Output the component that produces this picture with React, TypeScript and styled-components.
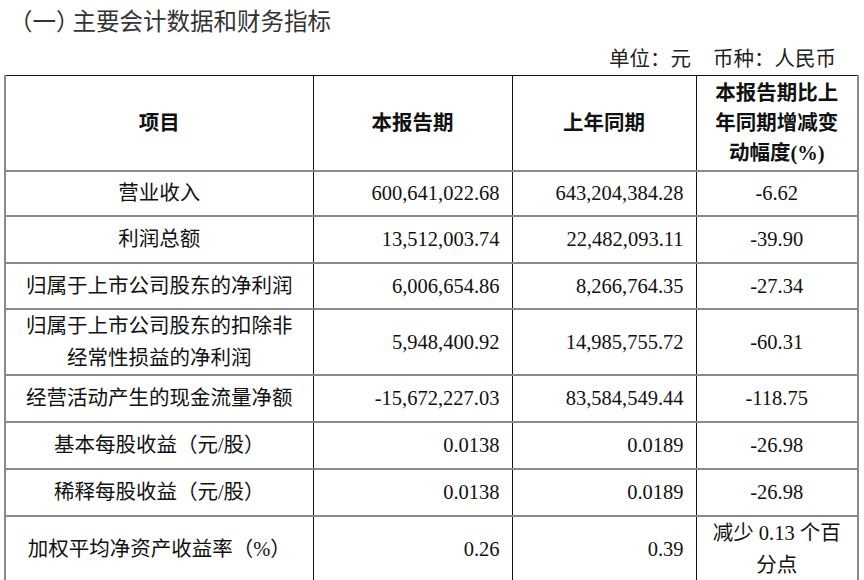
import React from 'react'
import styled, { createGlobalStyle } from 'styled-components'

const GlobalStyle = createGlobalStyle`
    html, body {
        margin: 0;
        padding: 0;
        background: #ffffff;
    }
    body {
        font-family: "Liberation Serif", "Noto Sans CJK SC", serif;
        color: #111;
    }
`;

const Page = styled.div`
    width: 864px;
    height: 580px;
    overflow: hidden;
    padding: 0 0 0 4px;
    box-sizing: border-box;
`;

const Title = styled.h2`
    margin: 0;
    padding: 8px 0 0 5px;
    height: 36px;
    box-sizing: border-box;
    font-size: 23.5px;
    line-height: 28px;
    font-weight: normal;
    color: #333;
    white-space: nowrap;
`;

// closing bracket of the title is set tighter than a full em
const Paren = styled.span<{ $tight?: boolean }>`
    letter-spacing: ${p => (p.$tight ? '-7px' : '0')};
`;

const Unit = styled.div`
    display: flex;
    justify-content: flex-end;
    gap: 22px;
    padding-right: 28px;
    height: 39px;
    font-size: 20.5px;
    line-height: 47px;
    color: #222;
`;

const Table = styled.table`
    width: 853px;
    table-layout: fixed;
    border-collapse: collapse;
    border-top: 1px solid #111;
    border-left: 2px solid #8a8a8a;
    border-right: 2px solid #8a8a8a;
`;

const Row = styled.tr<{ $h: number }>`
    height: ${p => p.$h}px;
    border-bottom: 2px solid #8a8a8a;
`;

const HeadCell = styled.th<{ $pad?: number }>`
    border-left: 1px solid #111;
    font-family: "Liberation Serif", "Noto Sans CJK SC", serif;
    font-size: 20.5px;
    line-height: 30px;
    font-weight: bold;
    text-align: center;
    padding: 0 ${p => p.$pad ?? 8}px;
    color: #111;
    &:first-child { border-left: none; }
`;

const Cell = styled.td<{ $align?: 'left' | 'center' | 'right' }>`
    border-left: 1px solid #111;
    font-size: 20.5px;
    line-height: 32px;
    text-align: ${p => p.$align ?? 'center'};
    padding: ${p => (p.$align === 'right' ? '0 12px 0 6px' : '0 10px')};
    color: #111;
    vertical-align: middle;
    &:first-child { border-left: none; }
`;

type Item = { label: string; cur: string; prev: string; change: string; h: number };

const rows: Item[] = [
    { label: '营业收入', cur: '600,641,022.68', prev: '643,204,384.28', change: '-6.62', h: 45 },
    { label: '利润总额', cur: '13,512,003.74', prev: '22,482,093.11', change: '-39.90', h: 47 },
    { label: '归属于上市公司股东的净利润', cur: '6,006,654.86', prev: '8,266,764.35', change: '-27.34', h: 46 },
    { label: '归属于上市公司股东的扣除非经常性损益的净利润', cur: '5,948,400.92', prev: '14,985,755.72', change: '-60.31', h: 63 },
    { label: '经营活动产生的现金流量净额', cur: '-15,672,227.03', prev: '83,584,549.44', change: '-118.75', h: 47 },
    { label: '基本每股收益（元/股）', cur: '0.0138', prev: '0.0189', change: '-26.98', h: 47 },
    { label: '稀释每股收益（元/股）', cur: '0.0138', prev: '0.0189', change: '-26.98', h: 47 },
    { label: '加权平均净资产收益率（%）', cur: '0.26', prev: '0.39', change: '减少 0.13 个百分点', h: 62 },
];

const App: React.FC = () => {
    return (
        <Page>
            <GlobalStyle />
            <Title>
                （一<Paren $tight>）</Paren>主要会计数据和财务指标
            </Title>
            <Unit>
                <span>单位：元</span>
                <span>币种：人民币</span>
            </Unit>
            <Table>
                <colgroup>
                    <col style={{ width: 308 }} />
                    <col style={{ width: 199 }} />
                    <col style={{ width: 184 }} />
                    <col style={{ width: 162 }} />
                </colgroup>
                <thead>
                    <Row $h={95}>
                        <HeadCell>项目</HeadCell>
                        <HeadCell>本报告期</HeadCell>
                        <HeadCell>上年同期</HeadCell>
                        <HeadCell $pad={14}>本报告期比上年同期增减变动幅度(%)</HeadCell>
                    </Row>
                </thead>
                <tbody>
                    {rows.map(r => (
                        <Row key={r.label} $h={r.h}>
                            <Cell>{r.label}</Cell>
                            <Cell $align="right">{r.cur}</Cell>
                            <Cell $align="right">{r.prev}</Cell>
                            <Cell>{r.change}</Cell>
                        </Row>
                    ))}
                    <Row $h={40}>
                        <Cell>&nbsp;</Cell>
                        <Cell $align="right">&nbsp;</Cell>
                        <Cell $align="right">&nbsp;</Cell>
                        <Cell>&nbsp;</Cell>
                    </Row>
                </tbody>
            </Table>
        </Page>
    );
};

export default App;
